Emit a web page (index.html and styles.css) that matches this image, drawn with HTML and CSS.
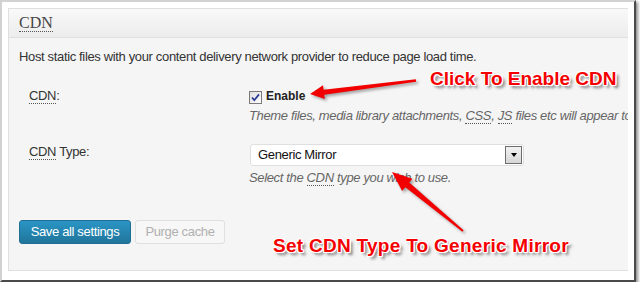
FILE: index.html
```html
<!DOCTYPE html>
<html>
<head>
<meta charset="utf-8">
<link rel="stylesheet" href="styles.css">
</head>
<body>
<div class="shot">
  <div class="panel">
    <div class="panel-head"><h3><abbr>CDN</abbr></h3></div>
    <div class="panel-body">
      <p class="intro">Host static files with your content delivery network provider to reduce page load time.</p>
      <div class="form">
        <div class="row">
          <div class="label"><abbr>CDN</abbr>:</div>
          <div class="field">
            <label class="check">
              <svg class="box" width="13" height="13" viewBox="0 0 13 13">
                <defs>
                  <linearGradient id="cb" x1="0" y1="0" x2="1" y2="1">
                    <stop offset="0" stop-color="#dcdcdc"/>
                    <stop offset="1" stop-color="#ffffff"/>
                  </linearGradient>
                </defs>
                <rect x="0.5" y="0.5" width="12" height="12" fill="url(#cb)" stroke="#7a7a7a"/>
                <path d="M3 6.5 L5.3 9.2 L10 3.4" fill="none" stroke="#2b3b96" stroke-width="1.8"/>
              </svg>
              <span class="enable">Enable</span>
            </label>
            <div class="hint">Theme files, media library attachments, <abbr>CSS</abbr>, <abbr>JS</abbr> files etc will appear to</div>
          </div>
        </div>
        <div class="row row-2">
          <div class="label"><abbr>CDN</abbr> Type:</div>
          <div class="field">
            <div class="select">
              <span class="select-text">Generic Mirror</span>
              <span class="select-btn"><span class="tri"></span></span>
            </div>
            <div class="hint hint-2">Select the <abbr>CDN</abbr> type you wish to use.</div>
          </div>
        </div>
      </div>
      <div class="actions">
        <button class="btn btn-primary">Save all settings</button>
        <button class="btn btn-disabled">Purge cache</button>
      </div>
    </div>
  </div>

  <svg class="arrows" width="640" height="286" viewBox="0 0 640 286">
    <polygon fill="#f20000" points="310,94 323,85.3 323.6,89.7 415.8,79.3 416.2,81.7 324.2,94.7 324.8,99.1"/>
    <polygon fill="#f20000" points="392,172 412.5,178.8 409.2,182.6 463.6,230.2 462.4,231.8 405.4,187.2 402.1,191"/>
  </svg>
  <div class="note note-1">Click To Enable CDN</div>
  <div class="note note-2">Set CDN Type To Generic Mirror</div>
</div>
</body>
</html>
```
FILE: styles.css
```css
html, body {
  margin: 0;
  padding: 0;
  background: #fff;
}

.shot {
  position: relative;
  box-sizing: border-box;
  width: 636px;
  height: 282px;
  padding: 6px 6px 0 6px;
  border-style: solid;
  border-width: 2px;
  border-color: #d2d2d2 #4a4a4a #4a4a4a #d2d2d2;
  background: #fff;
  box-shadow: 2px 2px 3px rgba(0, 0, 0, 0.45);
  font-family: "Liberation Sans", Arial, sans-serif;
  font-size: 13px;
  letter-spacing: -0.35px;
  color: #333;
}

.panel {
  box-sizing: border-box;
  width: 620px;
  height: 263px;
  border: 1px solid #dfdfdf;
  border-right: none;
  background: #f5f5f5;
  overflow: hidden;
}

.panel-head {
  height: 28px;
  border-bottom: 1px solid #dfdfdf;
  background: linear-gradient(#f9f9f9, #ececec);
}

.panel-head h3 {
  margin: 0;
  padding-left: 10px;
  font-family: "Liberation Serif", "Times New Roman", serif;
  font-weight: normal;
  font-size: 16px;
  letter-spacing: 0;
  line-height: 28px;
  color: #464646;
}

abbr {
  text-decoration: none;
  border-bottom: 1px dotted #555;
}

.panel-body {
  padding: 10px 0 0 10px;
}

.intro {
  margin: 0;
  line-height: 18px;
  white-space: nowrap;
}

.form {
  margin-top: 21px;
}

.row {
  display: grid;
  grid-template-columns: 230px 1fr;
  line-height: 18px;
}

.row-2 {
  margin-top: 18px;
}

.label {
  padding-left: 10px;
}

.field {
  min-width: 0;
  overflow: hidden;
}

.check {
  display: flex;
  align-items: flex-start;
  height: 18px;
}

.box {
  display: block;
  margin-top: 4px;
  margin-right: 4px;
}

.enable {
  font-weight: bold;
  font-size: 12px;
  letter-spacing: 0;
  color: #222;
}

.hint {
  margin-top: 2px;
  font-style: italic;
  color: #666;
  white-space: nowrap;
}

.hint-2 {
  margin-top: 3px;
}

.select {
  box-sizing: border-box;
  display: flex;
  align-items: center;
  width: 274px;
  height: 22px;
  margin-top: 1px;
  margin-left: 1px;
  padding-left: 7px;
  border: 1px solid #dfdfdf;
  border-radius: 3px;
  background: #fff;
  color: #111;
}

.select-text {
  flex: 1;
}

.select-btn {
  box-sizing: border-box;
  display: flex;
  align-items: center;
  justify-content: center;
  width: 17px;
  height: 18px;
  margin-right: 1px;
  border: 1px solid #6e6e6e;
  background: linear-gradient(#f2f2f2, #d6d6d6);
}

.tri {
  width: 0;
  height: 0;
  border-left: 3px solid transparent;
  border-right: 3px solid transparent;
  border-top: 4px solid #000;
}

.actions {
  display: flex;
  gap: 4px;
  margin-top: 33px;
}

.btn {
  box-sizing: border-box;
  height: 24px;
  padding: 0;
  border-radius: 3px;
  font-family: "Liberation Sans", Arial, sans-serif;
  font-size: 13px;
  letter-spacing: -0.35px;
  line-height: 22px;
}

.btn-primary {
  width: 112px;
  border: 1px solid #1f6f93;
  background: linear-gradient(#2a95c5, #21759b);
  color: #fff;
}

.btn-disabled {
  width: 90px;
  border: 1px solid #e0e0e0;
  background: #f7f7f7;
  color: #b0b0b0;
}

.arrows {
  position: absolute;
  left: -2px;
  top: -2px;
  filter: drop-shadow(2px 2px 1.5px rgba(0, 0, 0, 0.35));
}

.note {
  position: absolute;
  font-family: "Liberation Sans", Arial, sans-serif;
  font-weight: bold;
  font-size: 19px;
  letter-spacing: 0;
  line-height: 19px;
  color: #f50000;
  white-space: nowrap;
  text-shadow:
    1px 0 0 #fff, -1px 0 0 #fff, 0 1px 0 #fff, 0 -1px 0 #fff,
    1px 1px 0 #fff, -1px -1px 0 #fff, 1px -1px 0 #fff, -1px 1px 0 #fff,
    3px 3px 3px rgba(0, 0, 0, 0.5);
}

.note-1 {
  left: 428px;
  top: 67px;
}

.note-2 {
  left: 271px;
  top: 234px;
  letter-spacing: 0.28px;
}
```
